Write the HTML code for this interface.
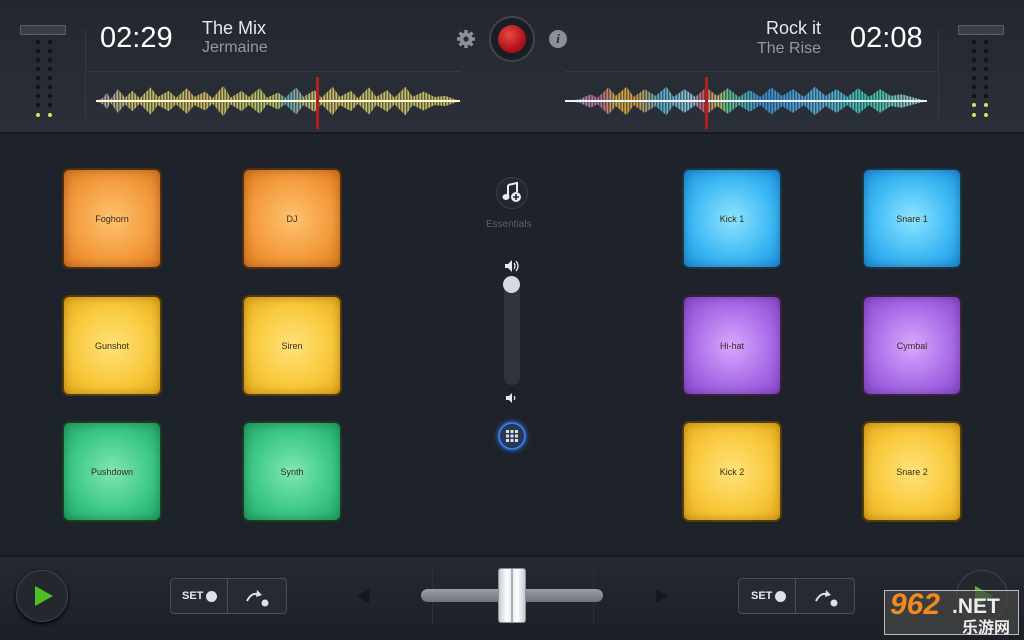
<!DOCTYPE html>
<html><head><meta charset="utf-8"><style>
*{margin:0;padding:0;box-sizing:border-box}
body{width:1024px;height:640px;overflow:hidden;background:#1e222a;font-family:"Liberation Sans",sans-serif;position:relative}
.top{position:absolute;left:0;top:0;width:1024px;height:134px;background:linear-gradient(#23272f,#2b2f38);border-bottom:2px solid #15181d}
.abs{position:absolute}
.time{font-size:29px;color:#fff;top:22px}
.t1{font-size:18px;color:#e6e8ec}
.t2{font-size:16px;color:#9399a3}
.pad{position:absolute;width:100px;height:101px;border-radius:7px;border:2px solid rgba(20,10,0,.7);font-size:9px;color:#3a2a1a;display:flex;align-items:center;justify-content:center;box-shadow:inset 0 0 10px rgba(0,0,0,.25)}
.or{background:radial-gradient(circle,#ffc270 0%,#f39a3c 60%,#e07a20 100%)}
.ye{background:radial-gradient(circle,#ffe27a 0%,#f8c83a 60%,#eaaa1c 100%)}
.gr{background:radial-gradient(circle,#7fe8b0 0%,#3cc785 60%,#21a664 100%)}
.bl{background:radial-gradient(circle,#8ee4ff 0%,#3cb8f4 60%,#1f8fe0 100%)}
.pu{background:radial-gradient(circle,#d8a8ff 0%,#a86ae6 60%,#8a48d0 100%)}
.bot{position:absolute;left:0;top:555px;width:1024px;height:85px;background:linear-gradient(#252932,#1c1f26);border-top:2px solid #14171c}
.setbox{position:absolute;width:117px;height:36px;border:1px solid #4a4f58;border-radius:4px;background:#262a32;top:578px}
.meter{position:absolute;top:25px;width:46px;height:10px;border:1px solid #5a5f68;background:#3a3e47;border-radius:1px}
.wave{position:absolute;height:34px;top:84px;-webkit-mask-image:repeating-linear-gradient(90deg,#000 0 1px,rgba(0,0,0,.35) 1px 2px,rgba(0,0,0,.7) 2px 3px);mask-image:repeating-linear-gradient(90deg,#000 0 1px,rgba(0,0,0,.35) 1px 2px,rgba(0,0,0,.7) 2px 3px)}
</style></head><body>
<div class="top"></div>
<div class="meter" style="left:20px"></div>
<div class="meter" style="left:958px"></div>
<svg class="abs" style="left:30px;top:38px" width="30" height="82">
<g fill="#121419"><circle cx="8" cy="4" r="2.3"/><circle cx="20" cy="4" r="2.3"/><circle cx="8" cy="13" r="2.3"/><circle cx="20" cy="13" r="2.3"/><circle cx="8" cy="22" r="2.3"/><circle cx="20" cy="22" r="2.3"/><circle cx="8" cy="31" r="2.3"/><circle cx="20" cy="31" r="2.3"/><circle cx="8" cy="40" r="2.3"/><circle cx="20" cy="40" r="2.3"/><circle cx="8" cy="49" r="2.3"/><circle cx="20" cy="49" r="2.3"/><circle cx="8" cy="58" r="2.3"/><circle cx="20" cy="58" r="2.3"/><circle cx="8" cy="67" r="2.3"/><circle cx="20" cy="67" r="2.3"/></g>
<circle cx="8" cy="77" r="2" fill="#c8ea6a"/><circle cx="20" cy="77" r="2" fill="#c8ea6a"/></svg>
<svg class="abs" style="left:966px;top:38px" width="30" height="82">
<g fill="#121419"><circle cx="8" cy="4" r="2.3"/><circle cx="20" cy="4" r="2.3"/><circle cx="8" cy="13" r="2.3"/><circle cx="20" cy="13" r="2.3"/><circle cx="8" cy="22" r="2.3"/><circle cx="20" cy="22" r="2.3"/><circle cx="8" cy="31" r="2.3"/><circle cx="20" cy="31" r="2.3"/><circle cx="8" cy="40" r="2.3"/><circle cx="20" cy="40" r="2.3"/><circle cx="8" cy="49" r="2.3"/><circle cx="20" cy="49" r="2.3"/><circle cx="8" cy="58" r="2.3"/><circle cx="20" cy="58" r="2.3"/></g>
<circle cx="8" cy="67" r="2" fill="#c8ea6a"/><circle cx="20" cy="67" r="2" fill="#c8ea6a"/><circle cx="8" cy="77" r="2" fill="#c8ea6a"/><circle cx="20" cy="77" r="2" fill="#c8ea6a"/></svg>
<div class="abs" style="left:85px;top:30px;width:1px;height:88px;background:#353943"></div>
<div class="abs" style="left:938px;top:30px;width:1px;height:88px;background:#353943"></div>
<div class="abs" style="left:86px;top:71px;width:375px;height:1px;background:#353943"></div>
<div class="abs" style="left:565px;top:71px;width:373px;height:1px;background:#353943"></div>
<div class="abs time" style="left:100px">02:29</div>
<div class="abs t1" style="left:202px;top:18px">The Mix</div>
<div class="abs t2" style="left:202px;top:39px">Jermaine</div>
<div class="abs time" style="left:850px">02:08</div>
<div class="abs t1" style="left:766px;top:18px">Rock it</div>
<div class="abs t2" style="left:757px;top:40px">The Rise</div>
<svg class="abs" style="left:456px;top:29px" width="20" height="20" viewBox="0 0 20 20"><g fill="#8a909a"><circle cx="10" cy="10" r="6.5"/><g stroke="#8a909a" stroke-width="3.4"><line x1="10" y1="1" x2="10" y2="19"/><line x1="1" y1="10" x2="19" y2="10"/><line x1="3.6" y1="3.6" x2="16.4" y2="16.4"/><line x1="16.4" y1="3.6" x2="3.6" y2="16.4"/></g></g><circle cx="10" cy="10" r="2.6" fill="#272b33"/></svg>
<div class="abs" style="left:489px;top:16px;width:46px;height:46px;border-radius:50%;background:#1a1d23;border:2px solid #3e434c"></div>
<div class="abs" style="left:498px;top:25px;width:28px;height:28px;border-radius:50%;background:radial-gradient(circle at 40% 35%,#e84a40,#b0141a 60%,#7a0a0e)"></div>
<div class="abs" style="left:549px;top:30px;width:18px;height:18px;border-radius:50%;background:#8a909a;color:#272b33;font:italic bold 13px 'Liberation Serif',serif;text-align:center;line-height:18px">i</div>
<div class="wave" style="left:96px;width:364px;background:linear-gradient(90deg,#c9b0e0,#e8e070 10%,#f4d86a 30%,#d6e870 50%,#6ac8ec 52%,#f0e070 60%,#e8e070 100%);clip-path:polygon(0 50%,2% 40%,3% 25%,4% 45%,6% 15%,8% 40%,10% 20%,12% 42%,15% 10%,17% 38%,20% 20%,22% 40%,25% 12%,27% 38%,30% 22%,32% 42%,35% 5%,37% 40%,40% 20%,42% 38%,45% 12%,47% 40%,50% 25%,52% 40%,55% 10%,57% 38%,60% 18%,62% 40%,65% 8%,67% 38%,70% 20%,72% 42%,75% 10%,77% 38%,80% 18%,82% 40%,85% 8%,87% 38%,90% 22%,93% 38%,96% 35%,100% 50%,96% 65%,93% 62%,90% 78%,87% 62%,85% 92%,82% 60%,80% 82%,77% 62%,75% 90%,72% 58%,70% 80%,67% 62%,65% 92%,62% 60%,60% 82%,57% 62%,55% 90%,52% 60%,50% 75%,47% 60%,45% 88%,42% 62%,40% 80%,37% 60%,35% 95%,32% 58%,30% 78%,27% 62%,25% 88%,22% 60%,20% 80%,17% 62%,15% 90%,12% 58%,10% 80%,8% 60%,6% 85%,4% 55%,3% 75%,2% 60%);opacity:.8"></div>
<div class="abs" style="left:96px;top:100px;width:364px;height:2px;background:#fff8d0"></div>
<div class="abs" style="left:316px;top:77px;width:3px;height:52px;background:#b02020"></div>
<div class="wave" style="left:565px;width:362px;background:linear-gradient(90deg,#b8c0d0,#d070a0 10%,#f0c040 14%,#f0b040 20%,#60c0e8 26%,#a0e0f0 35%,#e06080 38%,#e8d060 42%,#60e0a0 45%,#40a0f0 55%,#60c0f0 70%,#40e0c0 85%,#d0e0f0 100%);clip-path:polygon(0 50%,4% 45%,7% 30%,9% 40%,12% 10%,14% 35%,17% 8%,19% 38%,22% 15%,25% 35%,28% 8%,30% 38%,33% 15%,36% 38%,39% 10%,42% 35%,45% 12%,48% 38%,51% 18%,54% 38%,57% 10%,60% 35%,63% 15%,66% 38%,69% 8%,72% 35%,75% 15%,78% 38%,81% 12%,84% 38%,87% 15%,90% 35%,93% 30%,97% 42%,100% 50%,97% 58%,93% 70%,90% 65%,87% 85%,84% 62%,81% 88%,78% 62%,75% 85%,72% 65%,69% 92%,66% 62%,63% 85%,60% 65%,57% 90%,54% 62%,51% 82%,48% 62%,45% 88%,42% 65%,39% 90%,36% 62%,33% 85%,30% 62%,28% 92%,25% 65%,22% 85%,19% 62%,17% 92%,14% 65%,12% 90%,9% 60%,7% 70%,4% 55%);opacity:.85"></div>
<div class="abs" style="left:565px;top:100px;width:362px;height:2px;background:#e8f4ff"></div>
<div class="abs" style="left:705px;top:77px;width:3px;height:52px;background:#b02020"></div>
<div class="pad or" style="left:62px;top:168px">Foghorn</div>
<div class="pad or" style="left:242px;top:168px">DJ</div>
<div class="pad ye" style="left:62px;top:295px">Gunshot</div>
<div class="pad ye" style="left:242px;top:295px">Siren</div>
<div class="pad gr" style="left:62px;top:421px">Pushdown</div>
<div class="pad gr" style="left:242px;top:421px">Synth</div>
<div class="pad bl" style="left:682px;top:168px">Kick 1</div>
<div class="pad bl" style="left:862px;top:168px">Snare 1</div>
<div class="pad pu" style="left:682px;top:295px">Hi-hat</div>
<div class="pad pu" style="left:862px;top:295px">Cymbal</div>
<div class="pad ye" style="left:682px;top:421px">Kick 2</div>
<div class="pad ye" style="left:862px;top:421px">Snare 2</div>
<div class="abs" style="left:496px;top:177px;width:32px;height:32px;border-radius:50%;border:1px solid #3a3f48;background:#23272e"></div>
<svg class="abs" style="left:500px;top:181px" width="24" height="24"><path d="M8 4v11" stroke="#e8ebf0" stroke-width="2"/><path d="M8 4l9-2v9" stroke="#e8ebf0" stroke-width="2" fill="none"/><ellipse cx="6" cy="16" rx="3.5" ry="3" fill="#e8ebf0"/><circle cx="16" cy="16" r="5" fill="#e8ebf0"/><path d="M16 13v6M13 16h6" stroke="#23272e" stroke-width="1.6"/></svg>
<div class="abs" style="left:486px;top:219px;font-size:10px;color:#5a606a">Essentials</div>
<svg class="abs" style="left:503px;top:258px" width="20" height="16"><path d="M2 6h3l4-4v12l-4-4H2z" fill="#e6e9ee"/><path d="M11 5q2 3 0 6M13 3q4 5 0 10" stroke="#e6e9ee" fill="none" stroke-width="1.3"/></svg>
<div class="abs" style="left:504px;top:279px;width:16px;height:106px;border-radius:8px;background:#2f333c"></div>
<div class="abs" style="left:503px;top:276px;width:17px;height:17px;border-radius:50%;background:#d4d9e2"></div>
<svg class="abs" style="left:505px;top:391px" width="14" height="14"><path d="M1 5h3l3-3v10l-3-3H1z" fill="#e6e9ee"/><path d="M9 5q1.5 2 0 4" stroke="#e6e9ee" fill="none" stroke-width="1.2"/></svg>
<div class="abs" style="left:498px;top:422px;width:28px;height:28px;border-radius:50%;border:2px solid #2f7ae8;box-shadow:0 0 6px #2f7ae8;background:#2a3850"></div>
<svg class="abs" style="left:505px;top:429px" width="14" height="14"><g fill="#dde2ea"><rect x="1" y="1" width="3" height="3"/><rect x="5.5" y="1" width="3" height="3"/><rect x="10" y="1" width="3" height="3"/><rect x="1" y="5.5" width="3" height="3"/><rect x="5.5" y="5.5" width="3" height="3"/><rect x="10" y="5.5" width="3" height="3"/><rect x="1" y="10" width="3" height="3"/><rect x="5.5" y="10" width="3" height="3"/><rect x="10" y="10" width="3" height="3"/></g></svg>
<div class="bot"></div>
<div class="abs" style="left:16px;top:570px;width:52px;height:52px;border-radius:50%;background:#23272e;border:1px solid #3e434c;box-shadow:0 2px 4px #000"></div>
<svg class="abs" style="left:33px;top:585px" width="22" height="22"><path d="M2 1L20 11L2 21z" fill="#4fc024"/></svg>
<div class="abs" style="left:956px;top:570px;width:52px;height:52px;border-radius:50%;background:#23272e;border:1px solid #3e434c"></div>
<svg class="abs" style="left:973px;top:585px" width="22" height="22"><path d="M2 1L20 11L2 21z" fill="#4fc024"/></svg>
<div class="setbox" style="left:170px"></div>
<div class="setbox" style="left:738px"></div>
<div class="abs" style="left:227px;top:579px;width:1px;height:34px;background:#4a4f58"></div>
<div class="abs" style="left:795px;top:579px;width:1px;height:34px;background:#4a4f58"></div>
<div class="abs" style="left:182px;top:590px;font:bold 11px 'Liberation Sans';color:#e6e9ee">SET</div>
<div class="abs" style="left:206px;top:591px;width:11px;height:11px;border-radius:50%;background:#dde2ea"></div>
<div class="abs" style="left:751px;top:590px;font:bold 11px 'Liberation Sans';color:#e6e9ee">SET</div>
<div class="abs" style="left:775px;top:591px;width:11px;height:11px;border-radius:50%;background:#dde2ea"></div>
<svg class="abs" style="left:244px;top:585px" width="28" height="24"><path d="M3 16q5-10 13-6" stroke="#dde2ea" stroke-width="2" fill="none"/><path d="M13 5l5 5-6 2z" fill="#dde2ea"/><circle cx="21" cy="18" r="3.5" fill="#dde2ea"/></svg>
<svg class="abs" style="left:813px;top:585px" width="28" height="24"><path d="M3 16q5-10 13-6" stroke="#dde2ea" stroke-width="2" fill="none"/><path d="M13 5l5 5-6 2z" fill="#dde2ea"/><circle cx="21" cy="18" r="3.5" fill="#dde2ea"/></svg>
<svg class="abs" style="left:356px;top:588px" width="14" height="16"><path d="M13 1L1 8L13 15z" fill="#14171c"/></svg>
<svg class="abs" style="left:655px;top:588px" width="14" height="16"><path d="M1 1L13 8L1 15z" fill="#14171c"/></svg>
<div class="abs" style="left:432px;top:567px;width:1px;height:58px;background:#2c3038"></div>
<div class="abs" style="left:593px;top:567px;width:1px;height:58px;background:#2c3038"></div>
<div class="abs" style="left:421px;top:589px;width:182px;height:13px;border-radius:7px;background:linear-gradient(#9aa0aa,#6e747e)"></div>
<div class="abs" style="left:498px;top:568px;width:28px;height:55px;border-radius:3px;background:linear-gradient(90deg,#c8ccd4,#ffffff 30%,#e4e7ec 50%,#ffffff 70%,#c8ccd4);border:1px solid #8a8f98"></div>
<div class="abs" style="left:511px;top:569px;width:2px;height:53px;background:#a8adb6"></div>
<div class="abs" style="left:884px;top:590px;width:135px;height:45px;background:rgba(70,70,70,.75);border:1px solid #bbb"></div>
<div class="abs" style="left:890px;top:588px;font:italic bold 30px 'Liberation Sans';color:#f08a20">962</div>
<div class="abs" style="left:952px;top:595px;font:bold 21px 'Liberation Sans';color:#eee">.NET</div>
<div class="abs" style="left:962px;top:614px;font:bold 16px 'Noto Sans CJK SC',sans-serif;color:#eee">乐游网</div>
</body></html>
